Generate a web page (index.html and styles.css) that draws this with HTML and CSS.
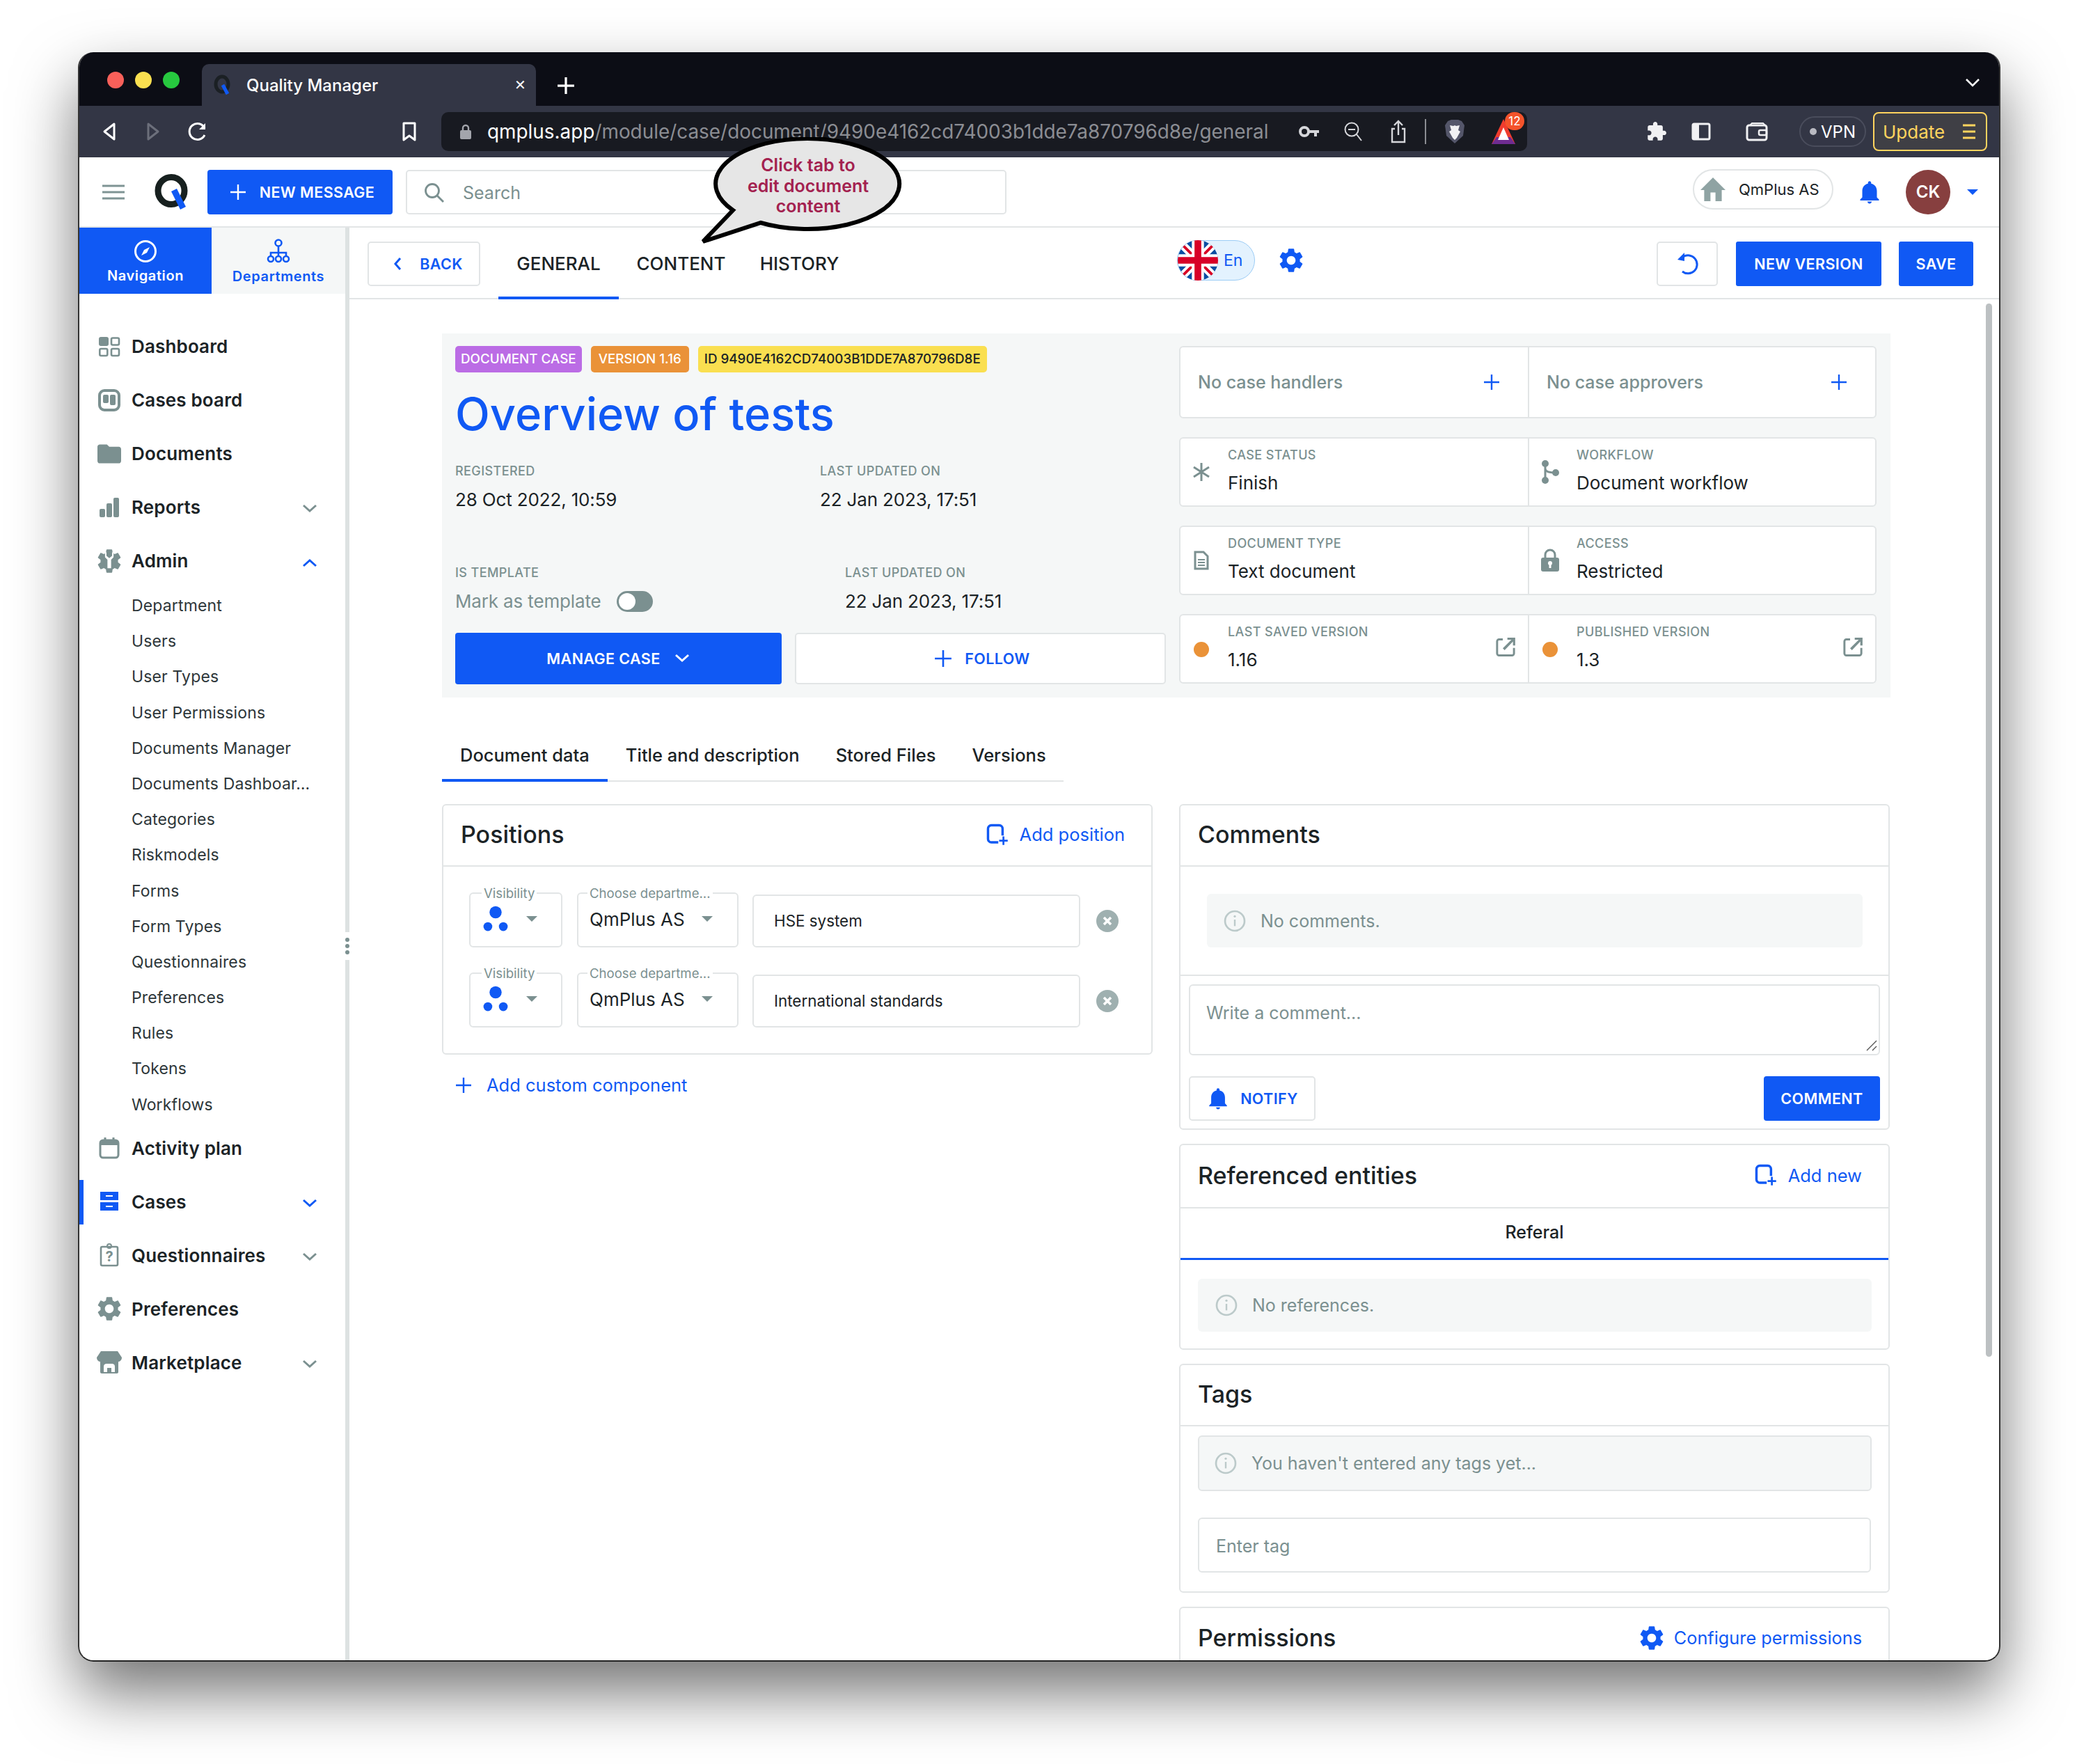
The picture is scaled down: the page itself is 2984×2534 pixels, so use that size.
FILE: index.html
```html
<!DOCTYPE html>
<html lang="en">
<head>
  <meta charset="UTF-8">
  <title>Quality Manager</title>
  <link rel="stylesheet" href="styles.css">
</head>
<body>
  <svg class="defs" width="0" height="0">
    <symbol id="gear" viewBox="0 0 24 24"><path d="M19.14 12.94c.04-.3.06-.61.06-.94 0-.32-.02-.64-.07-.94l2.03-1.58c.18-.14.23-.41.12-.61l-1.92-3.32c-.12-.22-.37-.29-.59-.22l-2.39.96c-.5-.38-1.03-.7-1.62-.94l-.36-2.54c-.04-.24-.24-.41-.48-.41h-3.84c-.24 0-.43.17-.47.41l-.36 2.54c-.59.24-1.13.57-1.62.94l-2.39-.96c-.22-.08-.47 0-.59.22L2.74 8.87c-.12.21-.08.47.12.61l2.03 1.58c-.05.3-.09.63-.09.94s.02.64.07.94l-2.03 1.58c-.18.14-.23.41-.12.61l1.92 3.32c.12.22.37.29.59.22l2.39-.96c.5.38 1.03.7 1.62.94l.36 2.54c.05.24.24.41.48.41h3.84c.24 0 .44-.17.47-.41l.36-2.54c.59-.24 1.13-.56 1.62-.94l2.39.96c.22.08.47 0 .59-.22l1.92-3.32c.12-.22.07-.47-.12-.61l-2.01-1.58zM12 15.6c-1.98 0-3.6-1.62-3.6-3.6s1.62-3.6 3.6-3.6 3.6 1.62 3.6 3.6-1.62 3.6-3.6 3.6z"/></symbol>
    <symbol id="bell" viewBox="0 0 24 24"><path d="M12 23c1.1 0 2-.9 2-2h-4c0 1.1.89 2 2 2zm7-6v-6c0-3.6-1.9-6.3-5.5-7.1V3c0-.83-.67-1.5-1.5-1.5s-1.5.67-1.5 1.5v.9C7 4.7 5 7.4 5 11v6l-2 2v1h18v-1l-2-2z"/></symbol>
    <symbol id="plus" viewBox="0 0 24 24"><path d="M12 1v22M1 12h22" fill="none" stroke="currentColor" stroke-width="2.4"/></symbol>
    <symbol id="chev" viewBox="0 0 24 24"><path d="M3 7l9 8 9-8" fill="none" stroke="currentColor" stroke-width="3"/></symbol>
    <symbol id="launch" viewBox="0 0 24 24"><path d="M19 19.5H5c-.5 0-1-.5-1-1v-13c0-.5.5-1 1-1h4V2.300H5c-1.700 0-3.200 1.500-3.200 3.200v13c0 1.700 1.500 3.200 3.200 3.200h14c1.700 0 3.200-1.500 3.200-3.200v-6H20v6c0 .5-.5 1-1 1zM14 1.500v2.200h4.300L9 13l2 2 9-9.300V10h2.400V1.500H14z"/></symbol>
    <symbol id="info" viewBox="0 0 24 24"><circle cx="12" cy="12" r="10.5" fill="none" stroke="currentColor" stroke-width="2"/><path d="M12 10.5v7" stroke="currentColor" stroke-width="1.8"/><circle cx="12" cy="7" r="1.2" fill="currentColor"/></symbol>
    <symbol id="addbox" viewBox="0 0 26 26"><path d="M14 22H6a4 4 0 0 1-4-4V6a4 4 0 0 1 4-4h9a4 4 0 0 1 4 4v8" fill="none" stroke="currentColor" stroke-width="2.8"/><path d="M20 15v10M15 20h10" fill="none" stroke="currentColor" stroke-width="2.2"/></symbol>
    <symbol id="dots" viewBox="0 0 24 24"><circle cx="12" cy="6" r="5.5"/><circle cx="5" cy="19" r="4"/><circle cx="19" cy="19" r="4"/></symbol>
    <symbol id="close" viewBox="0 0 32 32"><circle cx="16" cy="16" r="16" fill="#9fb0b0"/><path d="M11 11l10 10M21 11L11 21" stroke="#fff" stroke-width="3.6"/></symbol>
  </svg>

  <div class="window">
    <div class="tabbar">
      <div class="lights"><span class="light red"></span><span class="light yellow"></span><span class="light green"></span></div>
      <div class="browser-tab">
        <svg width="26" height="30" viewBox="0 0 26 30"><ellipse cx="13" cy="14" rx="9" ry="11" fill="none" stroke="#1b2024" stroke-width="5"/><path d="M14 15l7 13" stroke="#1059f4" stroke-width="5"/></svg>
        <span class="tab-title">Quality Manager</span>
        <span class="tab-close">✕</span>
      </div>
      <svg class="new-tab" width="26" height="26" viewBox="0 0 24 24"><path d="M12 1v22M1 12h22" stroke="#fff" stroke-width="3"/></svg>
      <svg class="tab-list" width="22" height="14" viewBox="0 0 22 14"><path d="M2 2l9 9 9-9" fill="none" stroke="#fff" stroke-width="2.6"/></svg>
    </div>

    <div class="toolbar">
      <svg class="tb-back" width="22" height="28" viewBox="0 0 22 28"><path d="M18 3L4 14l14 11z" fill="none" stroke="#fff" stroke-width="3" stroke-linejoin="round"/></svg>
      <svg class="tb-fwd" width="22" height="28" viewBox="0 0 22 28"><path d="M4 3l14 11L4 25z" fill="none" stroke="#6c6f7b" stroke-width="3" stroke-linejoin="round"/></svg>
      <svg class="tb-reload" width="30" height="30" viewBox="0 0 30 30"><path d="M25 20a11.5 11.5 0 1 1 0-10" fill="none" stroke="#fff" stroke-width="3"/><path d="M26 3v9h-9z" fill="#fff"/></svg>
      <svg class="tb-mark" width="22" height="30" viewBox="0 0 22 30"><path d="M3 3h16v24l-8-6-8 6z" fill="none" stroke="#fff" stroke-width="3" stroke-linejoin="round"/></svg>
      <div class="urlbar">
        <svg width="18" height="24" viewBox="0 0 18 24"><path d="M5 11V7a4 4 0 0 1 8 0v4" fill="none" stroke="#a3a5ac" stroke-width="2.4"/><rect x="1" y="10" width="16" height="13" rx="2" fill="#a3a5ac"/></svg>
        <span class="url"><b>qmplus.app</b>/module/case/document/9490e4162cd74003b1dde7a870796d8e/general</span>
        <div class="url-icons">
          <svg width="30" height="22" viewBox="0 0 30 22"><circle cx="8" cy="11" r="6" fill="none" stroke="#d5d6da" stroke-width="4"/><path d="M14 9h15v4h-3v5h-4v-5h-8z" fill="#d5d6da"/></svg>
          <svg width="28" height="30" viewBox="0 0 28 30"><circle cx="12" cy="12" r="9.5" fill="none" stroke="#d5d6da" stroke-width="2"/><path d="M7 12h10M19 19l7 9" stroke="#d5d6da" stroke-width="2"/></svg>
          <svg class="url-share" width="24" height="34" viewBox="0 0 24 34"><path d="M7 13H3v19h18V13h-4M12 22V2M6 8l6-6 6 6" fill="none" stroke="#d5d6da" stroke-width="2.4"/></svg>
          <span class="url-sep"></span>
          <svg width="30" height="36" viewBox="0 0 30 36"><path d="M5 3l5-2h10l5 2 4 6-2 15-12 11L3 24 1 9z" fill="#54566a"/><path d="M8 9l5 1 2-1 2 1 5-1-2 7 3 2-5 9-3 3-3-3-5-9 3-2z" fill="#f1f1f3"/></svg>
          <span class="bat">
            <svg width="36" height="40" viewBox="0 0 36 40"><path d="M18 2l17 36H1z" fill="#f03c2e"/><path d="M8 28h20l7 10H1z" fill="#6f2c91"/><path d="M18 14l8 18H10z" fill="#fff"/></svg>
            <span class="bat-count">12</span>
          </span>
        </div>
      </div>
      <div class="tb-right">
        <svg width="28" height="30" viewBox="1 1 22 22"><path fill="#f1f1f3" d="M20.5 11H19V7c0-1.1-.9-2-2-2h-4V3.5C13 2.12 11.88 1 10.5 1S8 2.12 8 3.5V5H4c-1.1 0-1.99.9-1.99 2v3.8H3.5c1.49 0 2.7 1.21 2.7 2.7s-1.21 2.7-2.7 2.7H2V20c0 1.1.9 2 2 2h3.8v-1.5c0-1.49 1.21-2.7 2.7-2.7 1.49 0 2.7 1.21 2.7 2.7V22H17c1.1 0 2-.9 2-2v-4h1.5c1.38 0 2.5-1.12 2.5-2.5S21.88 11 20.5 11z"/></svg>
        <svg class="tb-side" width="28" height="26" viewBox="0 0 28 26"><rect x="2" y="2" width="24" height="22" rx="2" fill="none" stroke="#f1f1f3" stroke-width="3"/><rect x="2" y="2" width="9" height="22" fill="#f1f1f3"/></svg>
        <svg class="tb-wallet" width="32" height="28" viewBox="0 0 32 28"><rect x="2" y="5" width="28" height="21" rx="3" fill="none" stroke="#f1f1f3" stroke-width="3"/><path d="M6 5l3-3h16l3 3" fill="none" stroke="#f1f1f3" stroke-width="2"/><rect x="19" y="12" width="11" height="7" rx="2" fill="none" stroke="#f1f1f3" stroke-width="2.5"/></svg>
        <div class="vpn"><span class="vpn-dot"></span>VPN</div>
        <div class="update">Update
          <svg width="20" height="24" viewBox="0 0 20 24"><path d="M1 3h18M1 12h18M1 21h18" stroke="#ffd45e" stroke-width="3"/></svg>
        </div>
      </div>
    </div>

    <header class="appbar">
      <svg class="burger" width="32" height="22" viewBox="0 0 32 22"><path d="M0 2h32M0 11h32M0 20h32" stroke="#7f9494" stroke-width="3"/></svg>
      <svg class="logo" width="50" height="52" viewBox="0 0 50 52"><ellipse cx="24" cy="24" rx="19" ry="19.5" fill="none" stroke="#17201f" stroke-width="9"/><path d="M28 23l13 26" stroke="#1059f4" stroke-width="9"/></svg>
      <button class="btn btn-primary btn-message"><svg width="24" height="24"><use href="#plus"/></svg>NEW MESSAGE</button>
      <div class="search">
        <svg width="30" height="30" viewBox="0 0 30 30"><circle cx="12" cy="12" r="9.5" fill="none" stroke="#7b9090" stroke-width="2.8"/><path d="M19 19l9 9" stroke="#7b9090" stroke-width="2.8"/></svg>
        <span>Search</span>
      </div>
      <div class="appbar-right">
        <div class="company">
          <svg width="36" height="36" viewBox="2 2 20 19"><path fill="#8fa3a3" d="M10 21v-7h4v7h5v-9h3L12 2 2 12h3v9z"/></svg>
          <span>QmPlus AS</span>
        </div>
        <svg class="bell-top" width="36" height="36"><use href="#bell"/></svg>
        <div class="avatar">CK</div>
        <span class="caret"></span>
      </div>
    </header>

    <div class="workspace">
      <aside class="sidebar">
        <div class="nav-tabs">
          <div class="nav-tab active">
            <svg width="34" height="34" viewBox="0 0 34 34"><circle cx="17" cy="17" r="14.5" fill="none" stroke="#fff" stroke-width="3"/><path d="M23 11l-4 8-8 4 4-8z" fill="#fff"/></svg>
            <span>Navigation</span>
          </div>
          <div class="nav-tab">
            <svg width="34" height="36" viewBox="0 0 34 36"><g fill="none" stroke="#1059f4" stroke-width="2.6"><circle cx="17" cy="6" r="4.5"/><path d="M17 11v8M6 25v-5h22v5M17 19v6"/><circle cx="6" cy="29" r="4"/><circle cx="17" cy="29" r="4"/><circle cx="28" cy="29" r="4"/></g></svg>
            <span>Departments</span>
          </div>
        </div>

        <nav class="menu">
          <a class="item">
            <svg class="item-icon" width="32" height="30" viewBox="0 0 32 30"><rect x="1" y="1" width="14" height="13" rx="3" fill="#7b9090"/><g fill="none" stroke="#7b9090" stroke-width="2.6"><rect x="19" y="2.5" width="11" height="10" rx="2"/><rect x="2.3" y="18" width="11" height="10" rx="2"/><rect x="19" y="18" width="11" height="10" rx="2"/></g></svg>
            <span class="item-label">Dashboard</span>
          </a>
          <a class="item">
            <svg class="item-icon" width="32" height="32" viewBox="0 0 32 32"><rect x="2" y="2" width="28" height="28" rx="7" fill="none" stroke="#7b9090" stroke-width="4"/><rect x="7" y="8" width="8" height="12" rx="2" fill="#7b9090"/><rect x="17" y="8" width="8" height="15" rx="2" fill="#7b9090"/></svg>
            <span class="item-label">Cases board</span>
          </a>
          <a class="item">
            <svg class="item-icon" width="34" height="30" viewBox="2 4 20 16"><path fill="#7b9090" d="M10 4H4c-1.1 0-2 .9-2 2v12c0 1.1.9 2 2 2h16c1.1 0 2-.9 2-2V8c0-1.1-.9-2-2-2h-8l-2-2z"/></svg>
            <span class="item-label">Documents</span>
          </a>
          <a class="item">
            <svg class="item-icon" width="30" height="30" viewBox="0 0 30 30"><rect x="1" y="17" width="8" height="12" rx="2" fill="#7b9090"/><rect x="11" y="9" width="8" height="20" rx="2" fill="#7b9090"/><rect x="21" y="1" width="8" height="28" rx="2" fill="#7b9090"/></svg>
            <span class="item-label">Reports</span>
            <svg class="item-chev" width="24" height="24"><use href="#chev"/></svg>
          </a>
          <a class="item">
            <svg class="item-icon" width="42" height="42" viewBox="0 0 24 24" fill="#7b9090"><use href="#gear"/><circle cx="12" cy="12" r="5"/><path d="M9.7 4.5v3.2L12 9.5l2.3-1.8V4.5l1.2 1v3.3l-2 2v7h-3v-7l-2-2V5.500z" fill="#fff"/></svg>
            <span class="item-label">Admin</span>
            <svg class="item-chev up" width="24" height="24"><use href="#chev"/></svg>
          </a>
          <div class="submenu">
            <a>Department</a>
            <a>Users</a>
            <a>User Types</a>
            <a>User Permissions</a>
            <a>Documents Manager</a>
            <a>Documents Dashboar…</a>
            <a>Categories</a>
            <a>Riskmodels</a>
            <a>Forms</a>
            <a>Form Types</a>
            <a>Questionnaires</a>
            <a>Preferences</a>
            <a>Rules</a>
            <a>Tokens</a>
            <a>Workflows</a>
          </div>
          <a class="item">
            <svg class="item-icon" width="30" height="32" viewBox="0 0 30 32"><rect x="2" y="5" width="26" height="25" rx="4" fill="none" stroke="#7b9090" stroke-width="3"/><path d="M2 5h26v7H2z" fill="#7b9090"/><path d="M9 1v6M21 1v6" stroke="#7b9090" stroke-width="3"/></svg>
            <span class="item-label">Activity plan</span>
          </a>
          <a class="item current">
            <svg class="item-icon" width="28" height="30" viewBox="0 0 28 30"><path fill="#1059f4" d="M1 1h26v12H1zM1 16h26v12H1z"/><path d="M9 7h10M9 22h10" stroke="#fff" stroke-width="2"/></svg>
            <span class="item-label">Cases</span>
            <svg class="item-chev blue" width="24" height="24"><use href="#chev"/></svg>
          </a>
          <a class="item">
            <svg class="item-icon" width="28" height="34" viewBox="0 0 28 34"><rect x="2" y="5" width="24" height="27" rx="2" fill="none" stroke="#7b9090" stroke-width="2.6"/><circle cx="14" cy="4" r="3" fill="none" stroke="#7b9090" stroke-width="2"/><text x="14" y="26" class="q-mark">?</text></svg>
            <span class="item-label">Questionnaires</span>
            <svg class="item-chev" width="24" height="24"><use href="#chev"/></svg>
          </a>
          <a class="item">
            <svg class="item-icon" width="42" height="42" fill="#7b9090"><use href="#gear"/></svg>
            <span class="item-label">Preferences</span>
          </a>
          <a class="item">
            <svg class="item-icon" width="38" height="34" viewBox="0 0 38 34"><path fill="#7b9090" d="M7 1h24l6 9c0 4-3 6-5 6v15c0 1-1 2-2 2H8c-1 0-2-1-2-2V16c-2 0-5-2-5-6z"/><path d="M11 31v-8c0-3 2-4 4-4h8c2 0 4 1 4 4v8h-5v-6h-6v6z" fill="#fff"/></svg>
            <span class="item-label">Marketplace</span>
            <svg class="item-chev" width="24" height="24"><use href="#chev"/></svg>
          </a>
        </nav>
        <span class="resize-dots"><i></i><i></i><i></i></span>
      </aside>

      <main class="main">
        <div class="topline">
          <button class="btn btn-outline btn-back"><svg width="12" height="20" viewBox="0 0 12 20"><path d="M10 2L3 10l7 8" fill="none" stroke="currentColor" stroke-width="3"/></svg>BACK</button>
          <div class="doc-tabs">
            <a class="doc-tab on">GENERAL</a>
            <a class="doc-tab">CONTENT</a>
            <a class="doc-tab">HISTORY</a>
          </div>
          <div class="lang">
            <svg class="flag" width="58" height="58" viewBox="0 0 60 60">
              <defs><clipPath id="flagclip"><circle cx="30" cy="30" r="30"/></clipPath></defs>
              <g clip-path="url(#flagclip)">
                <rect width="60" height="60" fill="#0b4ea2"/>
                <path d="M0 0l60 60M60 0L0 60" stroke="#fff" stroke-width="12"/>
                <path d="M0 0l60 60M60 0L0 60" stroke="#d80027" stroke-width="4"/>
                <path d="M30 0v60M0 30h60" stroke="#fff" stroke-width="18"/>
                <path d="M30 0v60M0 30h60" stroke="#d80027" stroke-width="10"/>
              </g>
            </svg>
            <span>En</span>
          </div>
          <svg class="lang-gear" width="42" height="42" fill="#1059f4"><use href="#gear"/></svg>
          <div class="actions">
            <button class="btn btn-outline btn-undo"><svg width="38" height="38" viewBox="0 0 38 38"><path d="M13 9a13 13 0 1 1-1 21" fill="none" stroke="#1059f4" stroke-width="3"/><path d="M15 3v12L5 13z" fill="#1059f4"/></svg></button>
            <button class="btn btn-primary btn-version">NEW VERSION</button>
            <button class="btn btn-primary btn-save">SAVE</button>
          </div>
        </div>

        <div class="scroll">
          <section class="overview">
            <div class="overview-left">
              <div class="badges">
                <span class="badge purple">DOCUMENT CASE</span>
                <span class="badge orange">VERSION 1.16</span>
                <span class="badge yellow">ID 9490E4162CD74003B1DDE7A870796D8E</span>
              </div>
              <h1>Overview of tests</h1>
              <div class="meta meta-a">
                <div><div class="label">REGISTERED</div><div class="value">28 Oct 2022, 10:59</div></div>
                <div><div class="label">LAST UPDATED ON</div><div class="value">22 Jan 2023, 17:51</div></div>
              </div>
              <div class="meta meta-b">
                <div><div class="label">IS TEMPLATE</div><div class="value muted">Mark as template <span class="toggle"></span></div></div>
                <div><div class="label">LAST UPDATED ON</div><div class="value">22 Jan 2023, 17:51</div></div>
              </div>
              <div class="case-actions">
                <button class="btn btn-primary btn-manage">MANAGE CASE<svg width="24" height="24"><use href="#chev"/></svg></button>
                <button class="btn btn-outline btn-follow"><svg width="26" height="26"><use href="#plus"/></svg>FOLLOW</button>
              </div>
            </div>
            <div class="overview-right">
              <div class="info-card tall">
                <div class="info-cell plain"><span class="muted-text">No case handlers</span><svg class="add" width="24" height="24"><use href="#plus"/></svg></div>
                <div class="info-cell plain"><span class="muted-text">No case approvers</span><svg class="add" width="24" height="24"><use href="#plus"/></svg></div>
              </div>
              <div class="info-card">
                <div class="info-cell">
                  <svg class="cell-icon" width="28" height="28" viewBox="0 0 28 28"><path d="M14 1v26M3 7l22 14M25 7L3 21" stroke="#7b9090" stroke-width="3"/></svg>
                  <div><div class="label">CASE STATUS</div><div class="cell-value">Finish</div></div>
                </div>
                <div class="info-cell">
                  <svg class="cell-icon" width="28" height="34" viewBox="0 0 28 34"><g fill="#7b9090"><circle cx="7" cy="5" r="5"/><circle cx="7" cy="29" r="5"/><circle cx="22" cy="18" r="5"/></g><path d="M7 5v24M7 12c0 5 8 6 15 6" fill="none" stroke="#7b9090" stroke-width="3"/></svg>
                  <div><div class="label">WORKFLOW</div><div class="cell-value">Document workflow</div></div>
                </div>
              </div>
              <div class="info-card">
                <div class="info-cell">
                  <svg class="cell-icon" width="22" height="28" viewBox="0 0 22 28"><path d="M2 2h12l6 6v18H2z" fill="none" stroke="#7b9090" stroke-width="3"/><path d="M6 13h10M6 17h10M6 21h10" stroke="#7b9090" stroke-width="1.8"/></svg>
                  <div><div class="label">DOCUMENT TYPE</div><div class="cell-value">Text document</div></div>
                </div>
                <div class="info-cell">
                  <svg class="cell-icon" width="28" height="34" viewBox="0 0 28 34"><path d="M7 15V9a7 7 0 0 1 14 0v6" fill="none" stroke="#7b9090" stroke-width="3"/><rect x="1" y="13" width="26" height="20" rx="3" fill="#7b9090"/><circle cx="14" cy="21" r="3" fill="#fff"/><path d="M14 22v6" stroke="#fff" stroke-width="3"/></svg>
                  <div><div class="label">ACCESS</div><div class="cell-value">Restricted</div></div>
                </div>
              </div>
              <div class="info-card">
                <div class="info-cell">
                  <span class="status-dot"></span>
                  <div><div class="label">LAST SAVED VERSION</div><div class="cell-value">1.16</div></div>
                  <svg class="open" width="32" height="32" fill="#7b9090"><use href="#launch"/></svg>
                </div>
                <div class="info-cell">
                  <span class="status-dot"></span>
                  <div><div class="label">PUBLISHED VERSION</div><div class="cell-value">1.3</div></div>
                  <svg class="open" width="32" height="32" fill="#7b9090"><use href="#launch"/></svg>
                </div>
              </div>
            </div>
          </section>

          <div class="sub-tabs">
            <a class="sub-tab on">Document data</a>
            <a class="sub-tab">Title and description</a>
            <a class="sub-tab">Stored Files</a>
            <a class="sub-tab">Versions</a>
          </div>

          <div class="columns">
            <div class="col">
              <section class="card positions">
                <div class="card-head">
                  <h2>Positions</h2>
                  <a class="link"><svg width="32" height="32"><use href="#addbox"/></svg>Add position</a>
                </div>
                <div class="position-rows">
                  <div class="position-row">
                    <fieldset class="field f-vis"><legend>Visibility</legend><svg class="vis-dots" width="38" height="38" fill="#1059f4"><use href="#dots"/></svg><span class="tri"></span></fieldset>
                    <fieldset class="field f-dep"><legend>Choose departme...</legend><span class="dep-name">QmPlus AS</span><span class="tri"></span></fieldset>
                    <div class="text-field">HSE system</div>
                    <svg class="row-x" width="32" height="32"><use href="#close"/></svg>
                  </div>
                  <div class="position-row">
                    <fieldset class="field f-vis"><legend>Visibility</legend><svg class="vis-dots" width="38" height="38" fill="#1059f4"><use href="#dots"/></svg><span class="tri"></span></fieldset>
                    <fieldset class="field f-dep"><legend>Choose departme...</legend><span class="dep-name">QmPlus AS</span><span class="tri"></span></fieldset>
                    <div class="text-field">International standards</div>
                    <svg class="row-x" width="32" height="32"><use href="#close"/></svg>
                  </div>
                </div>
              </section>
              <a class="link add-custom"><svg width="24" height="24"><use href="#plus"/></svg>Add custom component</a>
            </div>

            <div class="col col-right">
              <section class="card comments">
                <div class="card-head"><h2>Comments</h2></div>
                <div class="comments-empty">
                  <div class="notice"><svg width="32" height="32" class="notice-ic"><use href="#info"/></svg>No comments.</div>
                </div>
                <div class="comment-form">
                  <div class="comment-input">Write a comment...
                    <svg class="grip" width="16" height="16" viewBox="0 0 16 16"><path d="M1 15L15 1M9 15l6-6" stroke="#555" stroke-width="1.4"/></svg>
                  </div>
                  <div class="comment-actions">
                    <button class="btn btn-outline btn-notify"><svg width="34" height="34" fill="#1059f4"><use href="#bell"/></svg>NOTIFY</button>
                    <button class="btn btn-primary btn-comment">COMMENT</button>
                  </div>
                </div>
              </section>

              <section class="card refs">
                <div class="card-head">
                  <h2>Referenced entities</h2>
                  <a class="link"><svg width="32" height="32"><use href="#addbox"/></svg>Add new</a>
                </div>
                <div class="ref-tab">Referal</div>
                <div class="refs-body">
                  <div class="notice"><svg width="32" height="32" class="notice-ic"><use href="#info"/></svg>No references.</div>
                </div>
              </section>

              <section class="card tags">
                <div class="card-head"><h2>Tags</h2></div>
                <div class="tags-body">
                  <div class="notice bordered"><svg width="32" height="32" class="notice-ic"><use href="#info"/></svg>You haven't entered any tags yet...</div>
                  <div class="tag-input">Enter tag</div>
                </div>
              </section>

              <section class="card perms">
                <div class="card-head">
                  <h2>Permissions</h2>
                  <a class="link link-perms"><svg width="42" height="42" fill="#1059f4"><use href="#gear"/></svg>Configure permissions</a>
                </div>
              </section>
            </div>
          </div>
        </div>
        <span class="scroll-thumb"></span>
      </main>
    </div>

    <!-- speech bubble annotation over the screenshot -->
    <div class="bubble">
      <svg width="300" height="160" viewBox="0 0 300 160"><path d="M47 105A132 65 0 1 1 87 123L4 150Z" fill="#e6e6e6" stroke="#000" stroke-width="6"/></svg>
      <div class="bubble-text">Click tab to<br>edit document<br>content</div>
    </div>
  </div>
</body>
</html>
```

FILE: styles.css
```css
:root {
  --blue: #1059f4;
  --line: #e2e5e6;
  --muted: #7b9090;
  --ink: #1b2326;
  --soft: #f5f7f7;
}

* { box-sizing: border-box; }

html, body {
  margin: 0;
  background: #fff;
  font-family: 'Inter', 'Liberation Sans', sans-serif;
  color: var(--ink);
}
body { height: 2534px; overflow: hidden; }
.defs { position: absolute; }
svg { display: block; flex: none; }
a { color: inherit; text-decoration: none; }

.window {
  position: relative;
  width: 2762px;
  height: 2312px;
  margin: 75px 0 0 112px;
  display: flex;
  flex-direction: column;
  background: #fff;
  border-radius: 22px;
  overflow: hidden;
  border-bottom: 2px solid #222;
  border-right: 2px solid #333;
  border-left: 2px solid #333;
}
body::before {
  content: "";
  position: absolute;
  left: 112px; top: 75px;
  width: 2762px; height: 2312px;
  border-radius: 22px;
  box-shadow: 0 44px 90px rgba(0,0,0,.55);
}

/* browser chrome */
.tabbar {
  height: 77px;
  flex: none;
  display: flex;
  align-items: flex-end;
  background: #0c0d15;
  position: relative;
}
.lights { display: flex; gap: 16px; padding: 0 0 25px 40px; width: 176px; }
.light { width: 24px; height: 24px; border-radius: 50%; flex: none; }
.red { background: #f8605a; }
.yellow { background: #fdba2c; }
.green { background: #27c83f; }
.browser-tab {
  width: 480px;
  height: 60px;
  background: #333645;
  border-radius: 10px 10px 0 0;
  display: flex;
  align-items: center;
  padding: 0 14px 0 16px;
  gap: 22px;
}
.tab-title { color: #fff; font-size: 24px; font-weight: 500; flex: 1; }
.tab-close { color: #fff; font-size: 20px; }
.new-tab { margin: 0 0 16px 30px; }
.tab-list { margin: 0 27px 26px auto; }

.toolbar {
  height: 74px;
  flex: none;
  display: flex;
  align-items: center;
  background: #333645;
}
.tb-back { margin-left: 32px; }
.tb-fwd { margin-left: 41px; }
.tb-reload { margin-left: 38px; }
.tb-mark { margin-left: 278px; }
.urlbar {
  width: 1560px;
  height: 56px;
  margin-left: 35px;
  background: #181a21;
  border-radius: 10px;
  display: flex;
  align-items: center;
  padding: 0 16px 0 26px;
  gap: 22px;
}
.url { font-size: 27.9px; color: #8b8d93; white-space: nowrap; }
.url b { color: #fff; font-weight: 400; }
.url-icons { margin-left: auto; display: flex; align-items: center; gap: 34px; }
.url-share { margin-left: 5px; }
.url-sep { width: 2px; height: 36px; background: #8b8d93; margin: 0 -8px; }
.bat { position: relative; margin-left: 3px; }
.bat-count {
  position: absolute;
  top: -8px; left: 20px;
  width: 28px; height: 26px;
  border-radius: 13px;
  background: #f4532b;
  color: #fff;
  font-size: 17px;
  text-align: center;
  line-height: 26px;
}
.tb-right { flex: 1; display: flex; align-items: center; padding-left: 172px; }
.tb-side { margin-left: 36px; }
.tb-wallet { margin-left: 50px; }
.vpn {
  width: 96px;
  height: 44px;
  margin-left: 45px;
  border: 2px solid #4a4d5c;
  border-radius: 22px;
  color: #fff;
  font-size: 24px;
  display: flex;
  align-items: center;
  justify-content: center;
  gap: 6px;
}
.vpn-dot { width: 10px; height: 10px; border-radius: 50%; background: #b9bac2; }
.update {
  width: 164px;
  height: 56px;
  margin-left: 10px;
  border: 2px solid #ffd45e;
  border-radius: 8px;
  background: #3f3f45;
  color: #ffd45e;
  font-size: 26px;
  display: flex;
  align-items: center;
  justify-content: space-between;
  padding: 0 14px 0 12px;
}

/* app header */
.appbar {
  height: 101px;
  flex: none;
  display: flex;
  align-items: center;
  border-bottom: 2px solid var(--line);
  position: relative;
}
.burger { margin-left: 33px; }
.logo { margin-left: 43px; }
.btn {
  border: 0;
  font-family: inherit;
  font-size: 21.5px;
  font-weight: 600;
  letter-spacing: .4px;
  display: flex;
  align-items: center;
  justify-content: center;
  border-radius: 3px;
  padding: 0;
}
.btn-primary { background: var(--blue); color: #fff; }
.btn-outline { background: #fff; color: var(--blue); border: 2px solid var(--line); border-radius: 5px; }
.btn-message { width: 266px; height: 64px; margin-left: 26px; gap: 19px; padding-left: 6px; border-radius: 4px; }
.search {
  width: 863px;
  height: 64px;
  margin-left: 19px;
  border: 2px solid var(--line);
  border-radius: 5px;
  display: flex;
  align-items: center;
  padding: 2px 0 0 24px;
  gap: 26px;
  color: var(--muted);
  font-size: 25px;
}
.appbar-right { margin-left: auto; display: flex; align-items: center; padding-right: 30px; }
.company {
  width: 202px;
  height: 58px;
  border: 2px solid var(--line);
  border-radius: 29px;
  display: flex;
  align-items: center;
  padding-left: 9px;
  gap: 19px;
  font-size: 22px;
  margin-top: -8px;
}
.bell-top { margin-left: 34px; fill: var(--blue); }
.avatar {
  width: 64px;
  height: 64px;
  border-radius: 50%;
  margin-left: 34px;
  background: #873f3f;
  color: #fff;
  font-size: 24px;
  font-weight: 600;
  display: flex;
  align-items: center;
  justify-content: center;
}
.caret {
  width: 0; height: 0;
  margin-left: 24px;
  border-left: 8px solid transparent;
  border-right: 8px solid transparent;
  border-top: 8px solid var(--blue);
}

/* sidebar */
.workspace { flex: 1; display: flex; min-height: 0; }
.sidebar {
  width: 388px;
  flex: none;
  border-right: 6px solid #dde2e2;
  position: relative;
}
.nav-tabs { display: flex; height: 95px; width: 382px; }
.nav-tab {
  width: 193px;
  background: var(--soft);
  color: var(--blue);
  display: flex;
  flex-direction: column;
  align-items: center;
  justify-content: center;
  gap: 6px;
  padding-top: 2px;
  font-size: 20px;
  font-weight: 600;
  letter-spacing: .6px;
}
.nav-tab.active { width: 191px; background: var(--blue); color: #fff; }
.menu { padding-top: 37px; }
.item {
  height: 77px;
  display: flex;
  align-items: center;
  position: relative;
}
.item-icon { position: absolute; left: 43px; top: 50%; transform: translate(-50%, -50%); }
.item-label { margin-left: 75px; font-size: 26px; font-weight: 600; letter-spacing: .15px; }
.item-chev { position: absolute; left: 319px; top: 29px; color: var(--muted); }
.item-chev.up { transform: scaleY(-1); color: var(--blue); }
.item-chev.blue { color: var(--blue); }
.item.current::before {
  content: "";
  position: absolute;
  left: 0; top: 7px;
  width: 6px; height: 64px;
  background: var(--blue);
}
.q-mark { font-size: 20px; font-weight: 700; fill: #7b9090; text-anchor: middle; font-family: 'Inter', sans-serif; }
.submenu { display: flex; flex-direction: column; padding-top: 1px; margin-bottom: -2px; }
.submenu a {
  height: 51.2px;
  line-height: 51.2px;
  margin-left: 75px;
  font-size: 23px;
  letter-spacing: .15px;
  color: #2d3639;
  white-space: nowrap;
}
.resize-dots {
  position: absolute;
  right: -6px; top: 1012px;
  width: 6px;
  height: 40px;
  background: #fff;
  display: flex;
  flex-direction: column;
  justify-content: center;
  gap: 3px;
}
.resize-dots i { width: 6px; height: 6px; border-radius: 50%; background: #7b9090; }

/* main */
.main { flex: 1; min-width: 0; position: relative; }
.topline {
  height: 103px;
  display: flex;
  align-items: flex-start;
  border-bottom: 2px solid var(--line);
  position: relative;
}
.btn-back { width: 162px; height: 64px; margin: 20px 0 0 26px; gap: 26px; padding-left: 12px; }
.doc-tabs { display: flex; margin-left: 26px; }
.doc-tab {
  width: 173px;
  height: 103px;
  margin-right: 3px;
  padding-top: 36px;
  text-align: center;
  font-size: 26px;
  font-weight: 500;
  border-bottom: 4px solid transparent;
}
.doc-tab:nth-child(3) { margin-left: -6px; }
.doc-tab.on { border-bottom-color: var(--blue); }
.lang {
  width: 112px;
  height: 58px;
  margin: 18px 0 0 453px;
  background: #e3f2fe;
  border: 1px solid #9cccf5;
  border-radius: 29px;
  display: flex;
  align-items: center;
  gap: 8px;
  color: var(--blue);
  font-size: 23px;
}
.lang-gear { margin: 26px 0 0 31px; }
.actions { margin-left: auto; display: flex; gap: 25px; padding: 20px 37px 0 0; }
.btn-undo { width: 88px; height: 64px; }
.btn-version { width: 209px; height: 64px; margin-left: 1px; }
.btn-save { width: 107px; height: 64px; }

.scroll { padding: 49px 0 0 133px; width: 2214px; }
.scroll-thumb {
  position: absolute;
  right: 10px; top: 109px;
  width: 9px; height: 1513px;
  border-radius: 5px;
  background: #bcc0c2;
}

.overview {
  height: 523px;
  background: var(--soft);
  display: grid;
  grid-template-columns: 1021px 1002px;
  column-gap: 19px;
  padding: 18px 20px 18px 19px;
  width: 2081px;
}
.badges { display: flex; gap: 13px; }
.badge {
  height: 38px;
  padding: 0 9px;
  border-radius: 5px;
  font-size: 18.8px;
  font-weight: 500;
  line-height: 38px;
  color: #fff;
  white-space: nowrap;
}
.purple { background: #bb6ce5; padding: 0 8px; }
.orange { background: #ea9238; padding: 0 11px; }
.yellow { background: #fadf50; color: var(--ink); }
h1 {
  margin: 22px 0 0;
  font-size: 65px;
  line-height: 76px;
  font-weight: 500;
  color: var(--blue);
}
.meta { display: grid; }
.meta-a { grid-template-columns: 524px 1fr; margin-top: 32px; }
.meta-b { grid-template-columns: 560px 1fr; margin-top: 75px; }
.label { font-size: 18px; line-height: 24px; font-weight: 500; color: var(--muted); letter-spacing: .4px; }
.value { margin-top: 11px; font-size: 26px; line-height: 36px; letter-spacing: -.15px; display: flex; align-items: center; }
.value.muted { color: var(--muted); }
.toggle {
  width: 52px; height: 30px;
  margin-left: 22px;
  border-radius: 15px;
  background: #7b9090;
  position: relative;
}
.toggle::after {
  content: "";
  position: absolute;
  left: 3px; top: 3px;
  width: 24px; height: 24px;
  border-radius: 50%;
  background: #fff;
}
.case-actions { display: flex; gap: 19px; margin-top: 27px; }
.btn-manage { width: 469px; height: 74px; gap: 19px; border-radius: 4px; }
.btn-follow { width: 533px; height: 74px; gap: 18px; padding-left: 5px; }

.overview-right { display: flex; flex-direction: column; gap: 27px; }
.info-card {
  display: grid;
  grid-template-columns: 1fr 1fr;
  height: 100px;
  background: #fff;
  border: 2px solid var(--line);
  border-radius: 6px;
}
.info-card.tall { height: 104px; }
.info-cell {
  display: flex;
  align-items: center;
  position: relative;
  padding: 0 0 3px 68px;
}
.info-cell + .info-cell { border-left: 2px solid var(--line); }
.info-cell.plain { padding: 0 23px 0 25px; justify-content: space-between; }
.muted-text { font-size: 25px; font-weight: 500; color: var(--muted); }
.add { color: var(--blue); margin-right: 17px; }
.cell-icon { position: absolute; left: 30px; top: 50%; transform: translate(-50%, -50%); }
.status-dot {
  position: absolute;
  left: 19px; top: 38px;
  width: 22px; height: 22px;
  border-radius: 50%;
  background: #ea9238;
}
.cell-value { margin-top: 11px; font-size: 26px; line-height: 34px; }
.open { position: absolute; right: 16px; top: 30px; }

.sub-tabs {
  display: flex;
  width: 893px;
  height: 58px;
  margin-top: 63px;
  border-bottom: 2px solid var(--line);
}
.sub-tab {
  padding: 0 26px;
  height: 58px;
  font-size: 25.5px;
  font-weight: 500;
  line-height: 40px;
  white-space: nowrap;
  border-bottom: 4px solid transparent;
}
.sub-tab.on { border-bottom-color: var(--blue); }

.columns { display: grid; grid-template-columns: 1021px 1021px; column-gap: 38px; margin-top: 32px; }
.col-right { display: flex; flex-direction: column; gap: 20px; }
.card { background: #fff; border: 2px solid var(--line); border-radius: 6px; }
.card-head {
  height: 88px;
  display: flex;
  align-items: center;
  justify-content: space-between;
  padding: 0 38px 3px 25px;
  border-bottom: 2px solid var(--line);
}
h2 { margin: 0; font-size: 34px; font-weight: 500; }
.link { display: flex; align-items: center; gap: 16px; color: var(--blue); font-size: 25.5px; }
.link-perms { gap: 11px; font-size: 25.3px; }

.positions { height: 360px; }
.position-rows { padding-top: 26px; display: flex; flex-direction: column; gap: 25px; }
.position-row { display: flex; align-items: flex-end; padding-left: 37px; height: 90px; }
.field {
  flex: none;
  margin: 0;
  height: 90px;
  min-width: 0;
  padding: 0 0 14px 16px;
  border: 2px solid var(--line);
  border-radius: 6px;
  display: flex;
  align-items: center;
  justify-content: space-between;
  background: #fff;
}
.field legend {
  font-size: 18.6px;
  line-height: 24px;
  padding: 0 3px;
  color: var(--muted);
  white-space: nowrap;
}
.f-vis { width: 134px; }
.f-dep { width: 232px; margin-left: 21px; }
.f-dep legend { margin-left: -3px; }
.vis-dots { margin-left: 1px; }
.dep-name { font-size: 26px; white-space: nowrap; }
.tri {
  width: 0; height: 0;
  margin-right: 34px;
  border-left: 8px solid transparent;
  border-right: 8px solid transparent;
  border-top: 8px solid var(--muted);
}
.f-dep .tri { margin-right: 35px; }
.text-field {
  width: 471px;
  height: 76px;
  margin-left: 20px;
  border: 2px solid var(--line);
  border-radius: 6px;
  padding-left: 29px;
  line-height: 72px;
  font-size: 22.4px;
}
.row-x { margin: 0 0 22px 23px; }
.add-custom { margin: 28px 0 0 19px; gap: 21px; }

.comments { height: 468px; }
.comments-empty { height: 157px; padding-top: 39px; padding-left: 38px; border-bottom: 2px solid var(--line); }
.notice {
  width: 942px;
  height: 77px;
  padding-left: 24px;
  background: var(--soft);
  border-radius: 6px;
  display: flex;
  align-items: center;
  gap: 21px;
  color: var(--muted);
  font-size: 25px;
}
.notice-ic { color: #bccaca; }
.comment-form { padding: 12px 12px 0; }
.comment-input {
  height: 102px;
  border: 2px solid var(--line);
  border-radius: 6px;
  padding: 24px 23px;
  font-size: 25px;
  color: var(--muted);
  position: relative;
}
.grip { position: absolute; right: 2px; bottom: 4px; }
.comment-actions { display: flex; justify-content: space-between; margin-top: 30px; }
.btn-notify { width: 182px; height: 64px; gap: 15px; }
.btn-comment { width: 167px; height: 64px; border-radius: 4px; }

.refs { height: 296px; }
.refs .card-head { height: 91px; }
.ref-tab {
  height: 74px;
  border-bottom: 3px solid var(--blue);
  text-align: center;
  line-height: 68px;
  font-size: 25px;
  font-weight: 500;
}
.refs-body { padding: 27px 25px 0; }
.refs-body .notice { width: 968px; height: 76px; padding-left: 25px; }

.tags { height: 329px; }
.tags-body { padding: 13px 25px 0; }
.notice.bordered { width: 968px; height: 80px; border: 2px solid var(--line); padding-left: 22px; }
.tag-input {
  height: 79px;
  margin-top: 38px;
  border: 2px solid var(--line);
  border-radius: 6px;
  padding-left: 24px;
  line-height: 79px;
  font-size: 25px;
  color: var(--muted);
}
.perms { height: 120px; }
.perms .card-head { border-bottom: 0; }

/* annotation */
.bubble { position: absolute; left: 892px; top: 122px; width: 300px; height: 160px; }
.bubble-text {
  position: absolute;
  left: 30px; top: 26px;
  width: 250px;
  text-align: center;
  color: #a3214f;
  font-size: 25px;
  line-height: 29.5px;
  font-weight: 600;
}
```
